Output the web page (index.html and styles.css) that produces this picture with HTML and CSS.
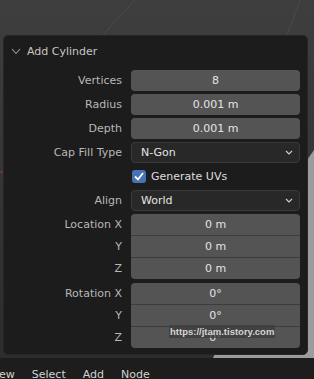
FILE: index.html
```html
<!DOCTYPE html>
<html lang="en">
<head>
    <meta charset="UTF-8">
    <title>Add Cylinder</title>
    <link rel="stylesheet" href="styles.css">
</head>
<body>
<div class="viewport">
  <svg class="backdrop" width="314" height="358" viewBox="0 0 314 358">
    <line x1="135" y1="0" x2="100" y2="38" stroke="#4b4b4b" stroke-width="1"/>
    <line x1="300" y1="0" x2="286" y2="38" stroke="#4b4b4b" stroke-width="1"/>
    <polygon points="314,150 314,358 213,358 300,170" fill="#9c9c9c"/>
    <line x1="0" y1="172" x2="3" y2="172" stroke="#a03a45" stroke-width="1"/>
  </svg>
  <div class="panel">
    <div class="panel-header">
      <svg class="chevron" width="10" height="7" viewBox="0 0 10 7"><polyline points="1,1 5,5.5 9,1" fill="none" stroke="#9a9a9a" stroke-width="1.1"/></svg>
      <span>Add Cylinder</span>
    </div>
    <div class="props">
      <div class="prop-label">Vertices</div><div class="field">8</div>
      <div class="prop-label">Radius</div><div class="field">0.001 m</div>
      <div class="prop-label">Depth</div><div class="field">0.001 m</div>
      <div class="prop-label">Cap Fill Type</div>
      <div class="field menu">N-Gon<svg width="8" height="5" viewBox="0 0 8 5"><polyline points="1,1 4,4 7,1" fill="none" stroke="#d0d0d0" stroke-width="1.1"/></svg></div>
      <div></div>
      <div class="check-row">
        <span class="checkbox"><svg width="14" height="13" viewBox="0 0 14 13"><polyline points="3,6.5 6,9.5 11,3" fill="none" stroke="#fff" stroke-width="1.8"/></svg></span>
        Generate UVs
      </div>
      <div class="prop-label">Align</div>
      <div class="field menu">World<svg width="8" height="5" viewBox="0 0 8 5"><polyline points="1,1 4,4 7,1" fill="none" stroke="#d0d0d0" stroke-width="1.1"/></svg></div>
      <div class="group">
        <div class="prop-label">Location X</div><div class="field top">0 m</div>
        <div class="prop-label">Y</div><div class="field mid">0 m</div>
        <div class="prop-label">Z</div><div class="field bottom">0 m</div>
      </div>
      <div class="group rotation">
        <div class="prop-label">Rotation X</div><div class="field top">0°</div>
        <div class="prop-label">Y</div><div class="field mid">0°</div>
        <div class="prop-label">Z</div><div class="field bottom">0°</div>
      </div>
    </div>
    <div class="watermark">https://jtam.tistory.com</div>
  </div>
</div>
<div class="header-bar">
  <span class="menu-item cut">ew</span>
  <span class="menu-item">Select</span>
  <span class="menu-item">Add</span>
  <span class="menu-item">Node</span>
</div>
</body>
</html>
```

FILE: styles.css
```css
body{
  margin: 0;
  width: 314px;
  height: 379px;
  overflow: hidden;
  background: #1d1d1d;
  font-family: "DejaVu Sans", sans-serif;
  font-size: 11px;
}

.viewport{
  position: relative;
  height: 358px;
  background: linear-gradient(to bottom, #3e3e3e, #2c2c2c);
  padding: 35px 0 0 3px;
  box-sizing: border-box;
}
.backdrop{
  position: absolute;
  left: 0;
  top: 0;
}

.panel{
  position: relative;
  width: 305px;
  height: 320px;
  box-sizing: border-box;
  background: #1c1c1c;
  border: 1px solid #262626;
  border-radius: 5px;
}

.panel-header{
  display: flex;
  align-items: center;
  height: 34px;
  padding: 0 0 4px 7px;
  box-sizing: border-box;
  color: #c6c6c6;
  font-size: 11px;
}
.chevron{
  margin-right: 6px;
}

.props{
  display: grid;
  grid-template-columns: 118px 169px;
  column-gap: 9px;
  row-gap: 3px;
}
.prop-label{
  display: flex;
  align-items: center;
  justify-content: flex-end;
  color: #b8b8b8;
  height: 21px;
}
.field{
  height: 21px;
  box-sizing: border-box;
  background: #545454;
  border-radius: 4px;
  color: #e4e4e4;
  display: flex;
  align-items: center;
  justify-content: center;
}
.field.menu{
  background: #282828;
  border: 1px solid #3a3a3a;
  justify-content: space-between;
  padding: 0 6px 0 9px;
}
.check-row{
  display: flex;
  align-items: center;
  height: 21px;
  color: #dedede;
}
.checkbox{
  display: flex;
  width: 14px;
  height: 13px;
  margin: 0 5px 0 1px;
  background: #4772b3;
  border-radius: 3px;
}

.group{
  grid-column: 1 / -1;
  display: grid;
  grid-template-columns: 118px 169px;
  column-gap: 9px;
}
.group .top{
  border-radius: 4px 4px 0 0;
}
.group .mid{
  border-radius: 0;
  height: 22px;
  border-top: 1px solid #3c3c3c;
}
.group .bottom{
  border-radius: 0 0 4px 4px;
  height: 22px;
  border-top: 1px solid #3c3c3c;
}
.group .prop-label:nth-child(n+3){
  height: 22px;
  padding-top: 1px;
  box-sizing: border-box;
}
.rotation{
  margin-top: 1px;
}

.watermark{
  position: absolute;
  left: 165px;
  top: 289px;
  padding: 0 1px;
  height: 13px;
  line-height: 13px;
  background: rgba(60, 60, 60, 0.75);
  color: #d6d6d6;
  font-family: "Liberation Sans", sans-serif;
  font-size: 9.5px;
  font-weight: bold;
}

.header-bar{
  display: flex;
  height: 21px;
  background: #1d1d1d;
  color: #d2d2d2;
  padding-top: 10px;
  box-sizing: border-box;
}
.menu-item{
  margin-left: 17px;
}
.menu-item.cut{
  margin-left: -1px;
}
```
